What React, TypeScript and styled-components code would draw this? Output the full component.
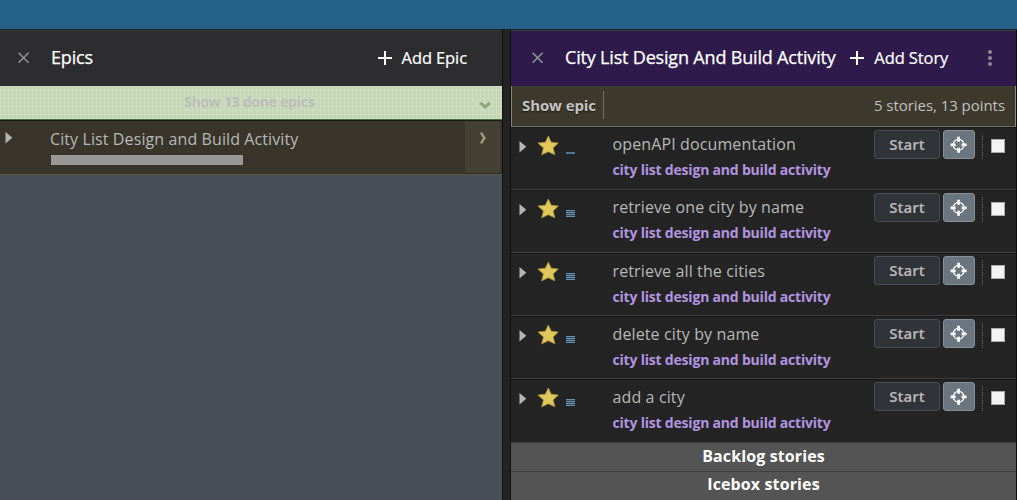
import React from "react";
import styled, { createGlobalStyle } from "styled-components";

const GlobalStyle = createGlobalStyle`
  * { box-sizing: border-box; }
  body { margin: 0; overflow: hidden; font-family: "Open Sans", "Noto Sans", sans-serif; background: #242424; }
  button { font-family: inherit; padding: 0; margin: 0; background: none; border: 0; }
`;

const Page = styled.div`
  width: 1017px;
  height: 500px;
  display: flex;
  flex-direction: column;
`;
const TopBar = styled.div`
  height: 29px;
  flex: none;
  background: #256189;
`;
const Panels = styled.main`
  flex: 1;
  min-height: 0;
  display: flex;
  background: #232323;
  border-top: 1px solid #1c2226;
`;
const Panel = styled.section<{ $width: number; $bg: string }>`
  width: ${(p) => p.$width}px;
  flex: none;
  display: flex;
  flex-direction: column;
  background: ${(p) => p.$bg};
`;
const Gutter = styled.div`
  width: 9px;
  flex: none;
  border-left: 1px solid #101010;
  border-right: 1px solid #101010;
`;
const Edge = styled.div`
  width: 1px;
  background: #0d0d0d;
`;
const Header = styled.header<{ $bg: string; $left: number; $right: number }>`
  height: 56px;
  flex: none;
  display: flex;
  align-items: center;
  padding: 0 ${(p) => p.$right}px 2px ${(p) => p.$left}px;
  border-top: 1px solid #3b3b3b;
  background: ${(p) => p.$bg};
  color: #fff;
  white-space: nowrap;
`;
const PanelTitle = styled.h2`
  margin: 0 auto 0 21px;
  font-size: 18px;
  line-height: 25px;
  font-weight: 400;
  letter-spacing: -0.18px;
  -webkit-text-stroke: 0.25px #fff;
`;
const AddButton = styled.button`
  display: flex;
  align-items: center;
  gap: 10px;
  color: #fff;
  font-size: 16.5px;
  line-height: 24px;
  letter-spacing: -0.1px;
  -webkit-text-stroke: 0.2px #fff;
`;
const MenuButton = styled.button`
  display: flex;
  margin-left: 39.8px;
`;

const DoneStrip = styled.div`
  height: 34px;
  flex: none;
  display: flex;
  align-items: center;
  padding: 0 11px 3px 184px;
  border-bottom: 1px solid #4d713c;
  background-color: #c4d6b6;
  background-image: linear-gradient(90deg, #cdddbf 1px, transparent 1px),
    linear-gradient(#cdddbf 1px, transparent 1px);
  background-size: 4px 4px;
  font-size: 14px;
  font-weight: 700;
  letter-spacing: -0.26px;
  color: #bcbdbd;
  svg { margin: 8px 0 0 auto; }
`;
const EpicRow = styled.div`
  height: 55px;
  flex: none;
  display: flex;
  border-top: 1px solid #181a14;
  border-bottom: 1px solid #5b5848;
  background: #39352a;
  padding-left: 5px;
`;
const EpicBody = styled.div`
  flex: 1;
  padding: 5px 0 0 37px;
`;
const EpicName = styled.div`
  font-size: 16px;
  line-height: 26px;
  letter-spacing: 0.1px;
  color: #b8b8b8;
`;
const Progress = styled.div`
  width: 192px;
  height: 10px;
  margin: 3px 0 0 1px;
  background: #999;
`;
const EpicOpen = styled.button`
  width: 35px;
  margin-right: 2px;
  display: flex;
  justify-content: center;
  padding-top: 11px;
  background: #444034;
  border-bottom: 1px solid #302d24;
`;

const Summary = styled.div`
  height: 41px;
  flex: none;
  display: flex;
  align-items: flex-start;
  padding: 5px 10px 0 10px;
  border: solid #8b887d;
  border-width: 0 1px 1px;
  border-bottom-color: #747061;
  background: #3e392d;
  color: #c0c0c0;
`;
const ShowEpic = styled.button`
  height: 28px;
  padding-right: 7px;
  border-right: 1px solid #68715d;
  font-size: 15px;
  font-weight: 700;
  letter-spacing: -0.1px;
  color: #c4c4c4;
  text-shadow: 0 1px 1px #1c1a14;
`;
const Totals = styled.span`
  margin-left: auto;
  font-size: 15px;
  line-height: 29px;
  letter-spacing: -0.05px;
`;

const StoryRow = styled.article`
  height: 63.1px;
  flex: none;
  display: flex;
  align-items: flex-start;
  padding: 3px 11px 0 8px;
  border-bottom: 1px solid #3d3d3d;
  background: #242424;
  box-shadow: inset 0 1px #1a1a1a;
  &:last-of-type { height: 62.6px; border-bottom: 0; }
`;
const StoryMarks = styled.div`
  width: 93.5px;
  flex: none;
  display: flex;
  align-items: flex-start;
`;
const Expander = styled.svg`
  margin-top: 11px;
`;
const Star = styled.svg`
  margin: 5px 0 0 10px;
`;
const Estimate = styled.div`
  width: 9px;
  margin-left: 7px;
  height: 24px;
  display: flex;
  flex-direction: column;
  justify-content: flex-end;
`;
const EstimateBar = styled.i`
  height: 1px;
  flex: none;
  background: #6593b3;
  & + & { margin-top: 1px; }
  box-shadow: 0 1px #35495a;
  &:only-child { height: 2px; box-shadow: none; background: #527590; }
  &:last-child:not(:only-child) { box-shadow: none; }
`;
const StoryText = styled.div`
  flex: 1;
  min-width: 0;
  white-space: nowrap;
  padding-top: 1.35px;
`;
const StoryName = styled.div`
  font-size: 16px;
  line-height: 26px;
  letter-spacing: 0.12px;
  color: #b8b8b8;
`;
const StoryLabel = styled.div`
  font-size: 14px;
  line-height: 26px;
  font-weight: 700;
  letter-spacing: -0.2px;
  color: #b294e0;
`;
const StartButton = styled.button`
  width: 66px;
  height: 29px;
  border: 1px solid #464b54;
  border-radius: 3px;
  background: #303338;
  color: #b9b9b9;
  font-size: 15px;
  line-height: 26px;
  font-weight: 600;
  -webkit-text-stroke: 0.15px #b9b9b9;
  padding-bottom: 1px;
`;
const TargetButton = styled.button`
  width: 32px;
  height: 29px;
  margin-left: 3px;
  display: flex;
  align-items: center;
  justify-content: center;
  border: 1px solid #87919a;
  border-radius: 3px;
  background: #6b757f;
`;
const Selector = styled.div`
  height: 25px;
  margin: 4px 0 0 7px;
  padding: 5px 0 0 8px;
  border-left: 1px dotted #666;
`;
const CheckBox = styled.div`
  width: 14px;
  height: 14px;
  border: 1px solid #aaa;
  background: #f3f3f3;
`;
const Footer = styled.div`
  height: 29px;
  flex: none;
  border-top: 1px solid #414141;
  background: #545454;
  color: #fff;
  text-align: center;
  font-size: 16px;
  line-height: 25px;
  font-weight: 700;
  letter-spacing: 0.12px;
  &:first-child { padding-top: 1px; }
`;
const FooterList = styled.div`
  margin-top: auto;
  height: 58px;
  flex: none;
`;

const CloseIcon = () => (
  <svg width="12" height="12" viewBox="0 0 12 12" stroke="#929292" strokeWidth="1.6" fill="none">
    <path d="M0.6 0.8l10 10M10.6 0.8l-10 10" />
  </svg>
);
const PlusIcon = () => (
  <svg width="14" height="14" viewBox="0 0 14 14" stroke="#fff" strokeWidth="2" fill="none">
    <path d="M7 0v14M0 7h14" />
  </svg>
);
const Triangle = () => (
  <Expander width="8" height="12" viewBox="0 0 8 12">
    <path d="M0.5 0v11.5L7.3 5.8z" fill="#b5b5b5" />
  </Expander>
);

const stories = [
  { name: "openAPI documentation", bars: 1 },
  { name: "retrieve one city by name", bars: 4 },
  { name: "retrieve all the cities", bars: 4 },
  { name: "delete city by name", bars: 4 },
  { name: "add a city", bars: 4 },
];

function Story({ name, bars }: { name: string; bars: number }) {
  return (
    <StoryRow>
      <StoryMarks>
        <Triangle />
        <Star width="22" height="21" viewBox="0 0 22 21">
          <path
            d="M11.3 1l2.9 6.2 7.1.9-5.2 4.8 1.8 6.9-6.6-3.1-6.6 3.1 1.8-6.9L.9 8.1l7.5-.9z"
            fill="#e0c75c"
            stroke="#b0953b"
            strokeWidth="0.8"
          />
        </Star>
        <Estimate>
          {Array.from({ length: bars }, (_, i) => (
            <EstimateBar key={i} />
          ))}
        </Estimate>
      </StoryMarks>
      <StoryText>
        <StoryName>{name}</StoryName>
        <StoryLabel>city list design and build activity</StoryLabel>
      </StoryText>
      <StartButton>Start</StartButton>
      <TargetButton>
        <svg width="18" height="18" viewBox="0 0 18 18" fill="none" stroke="#fff">
          <circle cx="8.6" cy="8.8" r="5.4" strokeWidth="1.3" />
          <path d="M8.6 .8v5M8.6 11.8v5M.6 8.8h5M11.6 8.8h5" strokeWidth="2.8" />
        </svg>
      </TargetButton>
      <Selector>
        <CheckBox />
      </Selector>
    </StoryRow>
  );
}

export default function App() {
  return (
    <Page>
      <GlobalStyle />
      <TopBar />
      <Panels>
        <Panel $width={502} $bg="#484f58">
          <Header $bg="#2d2d2f" $left={18} $right={35}>
            <CloseIcon />
            <PanelTitle>Epics</PanelTitle>
            <AddButton>
              <PlusIcon />
              Add Epic
            </AddButton>
          </Header>
          <DoneStrip>
            Show 13 done epics
            <svg width="12" height="9" viewBox="0 0 12 9" fill="none" stroke="#8fa67c" strokeWidth="3">
              <path d="M1.2 1.8L6 6l4.8-4.2" />
            </svg>
          </DoneStrip>
          <EpicRow>
            <Triangle />
            <EpicBody>
              <EpicName>City List Design and Build Activity</EpicName>
              <Progress />
            </EpicBody>
            <EpicOpen>
              <svg width="8" height="12" viewBox="0 0 8 12" fill="none" stroke="#a09a82" strokeWidth="2.4">
                <path d="M2 .7L5.4 6 2 11.3" />
              </svg>
            </EpicOpen>
          </EpicRow>
        </Panel>
        <Gutter />
        <Panel $width={505} $bg="#242424">
          <Header $bg="#2f1b4b" $left={21} $right={24}>
            <CloseIcon />
            <PanelTitle>City List Design And Build Activity</PanelTitle>
            <AddButton>
              <PlusIcon />
              Add Story
            </AddButton>
            <MenuButton>
              <svg width="4" height="16" viewBox="0 0 4 16" fill="#8f8a91">
                <circle cx="2" cy="2" r="2" />
                <circle cx="2" cy="8" r="2" />
                <circle cx="2" cy="14" r="2" />
              </svg>
            </MenuButton>
          </Header>
          <Summary>
            <ShowEpic>Show epic</ShowEpic>
            <Totals>5 stories, 13 points</Totals>
          </Summary>
          {stories.map((s) => (
            <Story key={s.name} {...s} />
          ))}
          <FooterList>
            <Footer>Backlog stories</Footer>
            <Footer>Icebox stories</Footer>
          </FooterList>
        </Panel>
        <Edge />
      </Panels>
    </Page>
  );
}
